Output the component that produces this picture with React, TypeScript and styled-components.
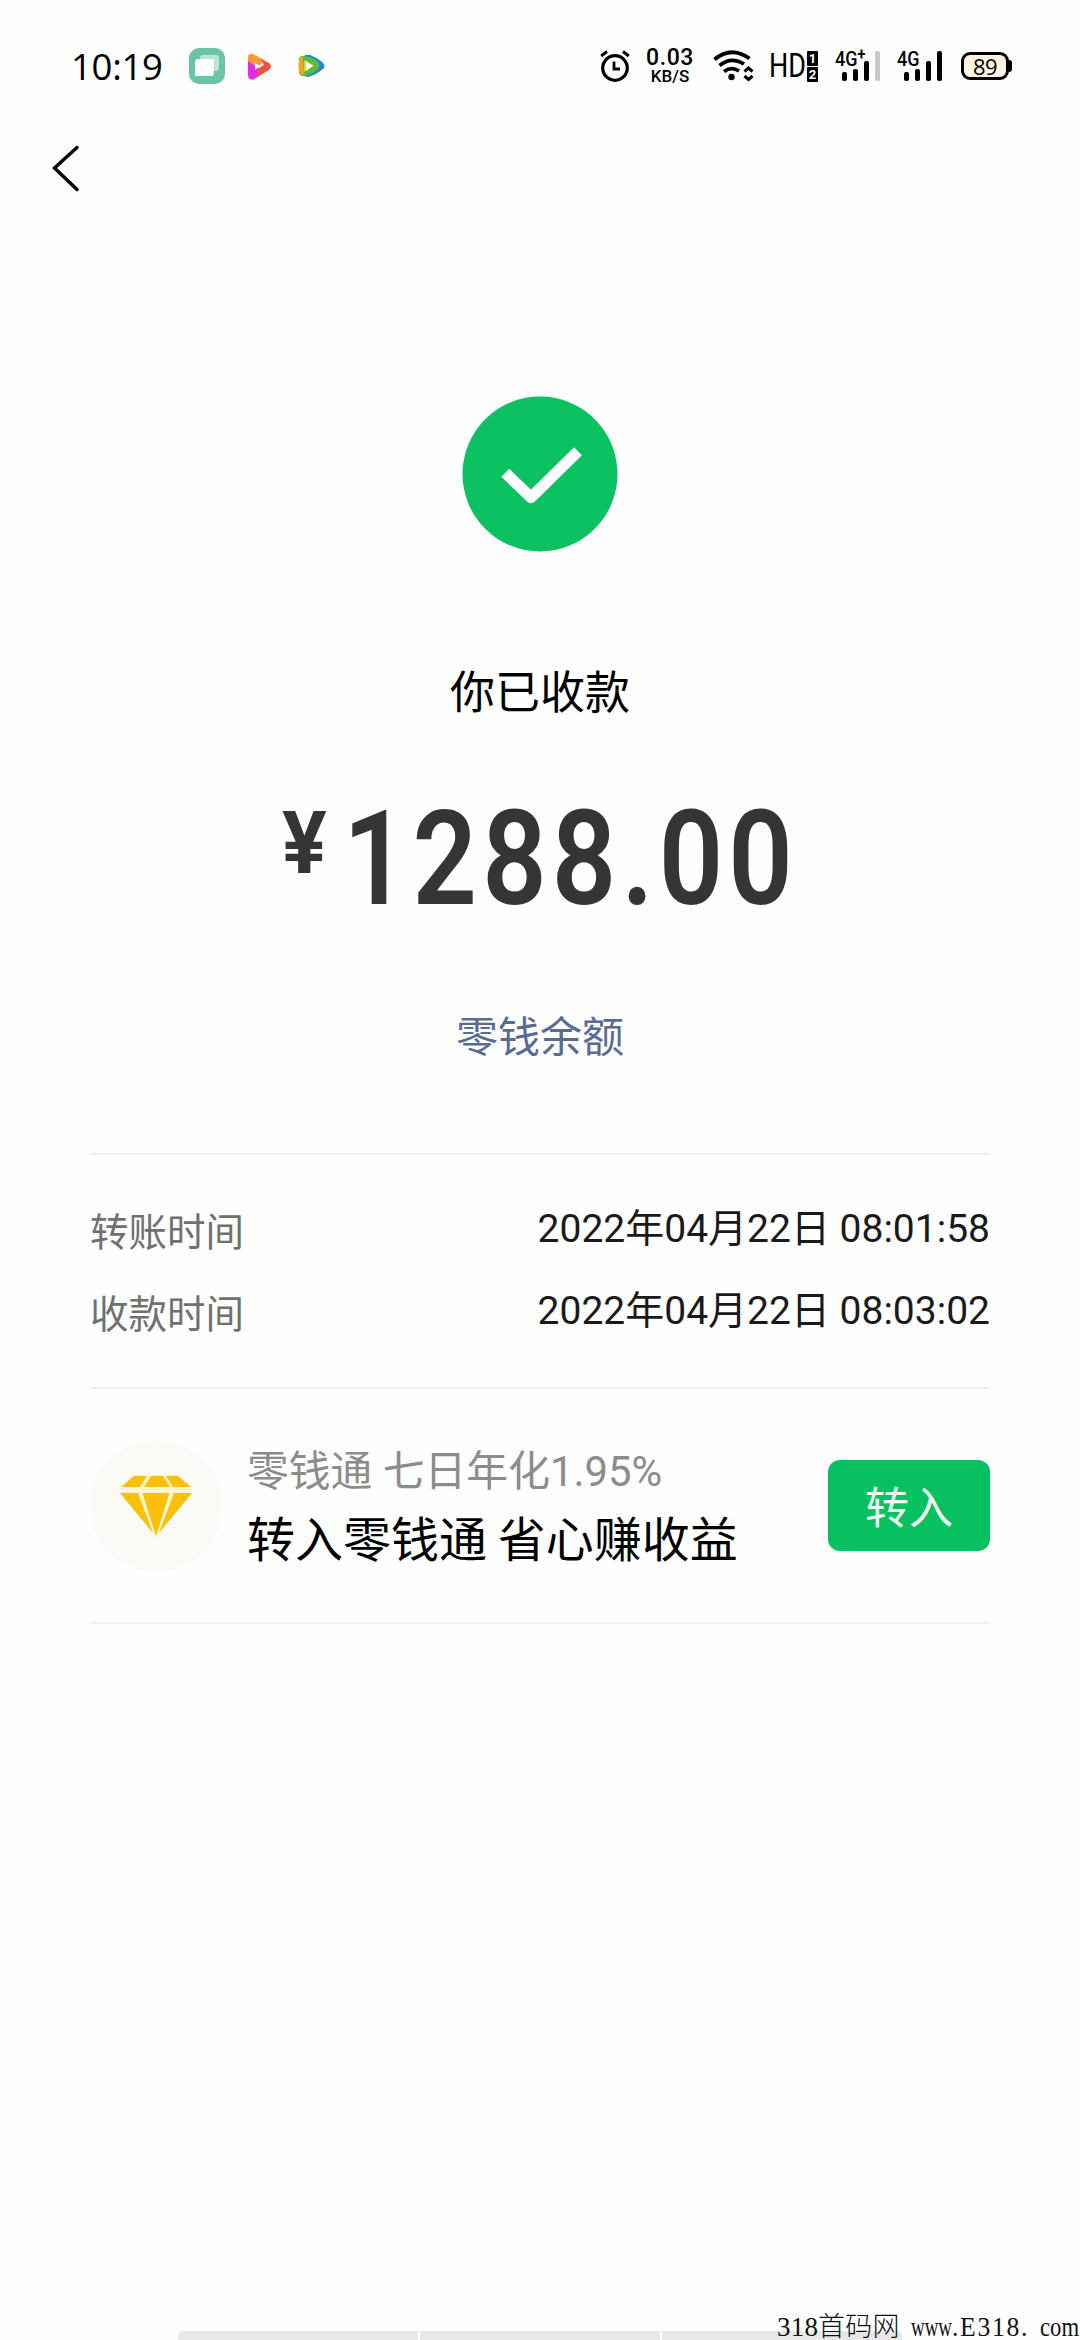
import React from 'react';
import styled, { createGlobalStyle } from 'styled-components';

const CJK = "'Noto Sans CJK SC', sans-serif";
const ROBOTO = "Roboto, 'Noto Sans CJK SC', sans-serif";

const GlobalStyle = createGlobalStyle`
  * { box-sizing: border-box; }
  body { margin: 0; background: #fefefe; }
  svg { display: block; flex: none; }
`;

const Page = styled.div`
  position: relative;
  display: flex;
  flex-direction: column;
  width: 1080px;
  height: 2340px;
  overflow: hidden;
  background: #fefefe;
  color: #000;
  font-family: ${CJK};
`;

const StatusBar = styled.header`
  display: flex;
  align-items: center;
  justify-content: space-between;
  height: 132px;
  padding: 0 68px 0 71px;
`;

const StatusGroup = styled.div`
  display: flex;
  align-items: center;
`;

const Clock = styled.span`
  width: 118px;
  font: 400 36.5px/48px 'Open Sans', sans-serif;
  letter-spacing: -0.3px;
`;

const StatusIcon = styled.svg<{ $before?: number }>`
  margin-left: ${(p) => p.$before ?? 0}px;
`;

const Speed = styled.div`
  display: flex;
  flex-direction: column;
  align-items: center;
  width: 50px;
  margin-left: 15px;
  margin-right: -1px;
  font-family: Roboto, sans-serif;
  font-weight: 500;
`;

const SpeedValue = styled.span`
  font-size: 23px;
  line-height: 20px;
  letter-spacing: 0.6px;
`;

const SpeedUnit = styled.span`
  font-size: 17px;
  line-height: 17px;
`;

const HdBadge = styled.div`
  display: flex;
  align-items: center;
  width: 50px;
  margin-left: 14px;
`;

const HdText = styled.span`
  width: 38px;
  font: 400 32.5px/36px Roboto, sans-serif;
  transform: scaleX(0.83);
  transform-origin: left;
`;

const SimStack = styled.span`
  display: flex;
  flex-direction: column;
  gap: 1px;
`;

const Sim = styled.span`
  width: 11px;
  height: 15px;
  border-radius: 1px;
  background: #000;
  color: #fff;
  font: 700 13px/15px Roboto, sans-serif;
  text-align: center;
`;

const SignalBox = styled.div<{ $before: number }>`
  position: relative;
  display: flex;
  align-items: flex-end;
  gap: 6px;
  width: 46px;
  height: 30px;
  margin-left: ${(p) => p.$before}px;
  padding-left: 7px;
`;

const SignalBar = styled.i<{ $height: number; $off?: boolean }>`
  width: 5px;
  height: ${(p) => p.$height}px;
  border-radius: 2px;
  background: ${(p) => (p.$off ? '#c8c8c8' : '#000')};
`;

const SignalLabel = styled.span`
  position: absolute;
  top: -2px;
  left: 0;
  font: 500 20px/20px Roboto, sans-serif;
  transform: scaleX(0.9);
  transform-origin: left;
  white-space: nowrap;
`;

const SignalPlus = styled.sup`
  position: relative;
  top: -3px;
  font-size: 16px;
  font-weight: 700;
  line-height: 0;
  vertical-align: 3px;
`;

const Battery = styled.div`
  display: flex;
  align-items: center;
  margin-left: 18px;
`;

const BatteryCell = styled.span`
  width: 48px;
  height: 28px;
  border: 3px solid #000;
  border-radius: 9px;
  background: #fdf5df;
  font: 400 22px/22px 'Open Sans', sans-serif;
  letter-spacing: -0.5px;
  text-align: center;
`;

const BatteryTip = styled.span`
  width: 3px;
  height: 12px;
  border-radius: 0 3px 3px 0;
  background: #000;
`;

const NavBar = styled.nav`
  display: flex;
  align-items: center;
  height: 72px;
  padding-left: 51px;
`;

const Result = styled.main`
  display: flex;
  flex-direction: column;
  align-items: center;
  padding-top: 192px;
`;

const Title = styled.h1`
  margin: 108px 0 0;
  font: 400 45px/60px ${CJK};
`;

const Amount = styled.div`
  display: flex;
  align-items: flex-start;
  width: 516px;
  height: 140px;
  margin-top: 69px;
  color: #353535;
  font-family: Roboto, sans-serif;
`;

const Currency = styled.span`
  width: 64px;
  font-size: 87px;
  font-weight: 700;
  line-height: 108px;
  transform: scaleX(0.96);
  transform-origin: left;
`;

const Digits = styled.span`
  margin-left: 14px;
  font-size: 132px;
  font-weight: 600;
  line-height: 140px;
  letter-spacing: 6px;
  transform: scaleX(0.855);
  transform-origin: left;
`;

const BalanceLink = styled.a`
  margin-top: 77px;
  color: #586b93;
  font-size: 42px;
  line-height: 56px;
`;

const Details = styled.dl`
  margin: 91px 90px 0;
  padding: 33px 0 35px;
  border-top: 2px solid #eee;
  border-bottom: 2px solid #eee;
`;

const DetailRow = styled.div`
  display: flex;
  justify-content: space-between;
  height: 82px;
  line-height: 82px;
`;

const DetailLabel = styled.dt`
  color: #707070;
  font-size: 38.5px;
`;

const DetailValue = styled.dd`
  margin: 0;
  color: #1a1a1a;
  font-family: ${ROBOTO};
  font-size: 39px;
`;

const Promo = styled.section`
  display: flex;
  align-items: center;
  height: 235px;
  margin: 0 90px;
  border-bottom: 2px solid #f1f1f1;
`;

const PromoBadge = styled.div`
  display: flex;
  align-items: center;
  justify-content: center;
  width: 132px;
  height: 132px;
  border-radius: 50%;
  background: #fafaf7;
`;

const PromoText = styled.div`
  display: flex;
  flex: 1;
  flex-direction: column;
  margin: -3px 0 0 25px;
  white-space: nowrap;
`;

const PromoRate = styled.span`
  color: #8c8c8c;
  font: 400 41.8px/66px ${ROBOTO};
`;

const PromoTitle = styled.span`
  margin-top: -2px;
  font-size: 48px;
  line-height: 66px;
`;

const TransferButton = styled.button`
  width: 162px;
  height: 91px;
  padding: 0;
  border: 0;
  border-radius: 12px;
  background: #07c160;
  color: #f2fff7;
  font: 400 44px/91px ${CJK};
`;

const HomeBar = styled.div`
  display: flex;
  gap: 2px;
  width: 724px;
  height: 9px;
  margin: auto auto 0 178px;
  border-radius: 5px 5px 0 0;
  overflow: hidden;
`;

const HomeSegment = styled.span`
  flex: 1;
  background: #e8e8e8;
`;

const Watermark = styled.div`
  position: absolute;
  right: 0;
  bottom: 0;
  display: flex;
  width: 303px;
  color: #111;
  font: 400 27px/26px 'Liberation Serif', 'Noto Sans CJK SC', serif;
  white-space: pre;
`;

const MarkPart = styled.span<{ $width: number; $scale?: number; $spacing?: number; $light?: boolean }>`
  width: ${(p) => p.$width}px;
  letter-spacing: ${(p) => p.$spacing ?? 0}px;
  font-weight: ${(p) => (p.$light ? 300 : 400)};
  transform: scaleX(${(p) => p.$scale ?? 1});
  transform-origin: left;
`;

const DETAILS = [
  { label: '转账时间', value: '2022年04月22日 08:01:58' },
  { label: '收款时间', value: '2022年04月22日 08:03:02' },
];

const BAR_HEIGHTS = [9, 12, 20, 30];

function Signal({ before, plus, level }: { before: number; plus?: boolean; level: number }) {
  return (
    <SignalBox $before={before}>
      {BAR_HEIGHTS.map((h, i) => (
        <SignalBar key={h} $height={h} $off={i >= level} />
      ))}
      <SignalLabel>4G{plus && <SignalPlus>+</SignalPlus>}</SignalLabel>
    </SignalBox>
  );
}

function CopyAppIcon() {
  return (
    <StatusIcon width="36" height="36" viewBox="0 0 36 36">
      <rect width="36" height="36" rx="10" fill="#6bc5a3" />
      <path d="M11 10Q11 7 14 7H27Q30 7 30 10V20Q30 23 27 23H11Z" fill="#b9e6d5" />
      <path d="M6 14Q6 11 9 11H22Q25 11 25 14V25Q25 28 22 28H6Z" fill="#fff" />
    </StatusIcon>
  );
}

function PinkPlayIcon() {
  return (
    <StatusIcon $before={22} width="25" height="27" viewBox="0 0 25 27">
      <path d="M1 5Q1 0 6 1L17 7L11 15L1 10Z" fill="#fb9a35" />
      <path d="M14 6L22 10Q26 13 22 17L9 25L10 16L17 12Z" fill="#f1503a" />
      <path d="M1 8L11 15L10 24Q6 28 3 26Q1 25 1 22Z" fill="#dc2ee8" />
      <path d="M8 10V17L13 13Z" fill="#fff" />
    </StatusIcon>
  );
}

function GreenPlayIcon() {
  return (
    <StatusIcon $before={26} width="27" height="24" viewBox="0 0 27 24">
      <path d="M6 2Q8 0 12 1Q20 4 25 9Q28 12 25 15Q18 21 10 23Q6 23 6 20Z" fill="#2388cf" />
      <path d="M1 5Q1 2 5 2Q15 3 20 8Q23 12 20 15Q13 22 4 22Q1 21 1 18Z" fill="#59bd36" />
      <path d="M1 5Q1 2 5 3L6 20Q2 22 1 18Q0 12 1 5Z" fill="#eda621" />
      <path d="M6 6L16 11.5L6 18Z" fill="#bde334" />
      <path d="M8 7L15 12L8 17Z" fill="#fff" />
    </StatusIcon>
  );
}

function AlarmIcon() {
  return (
    <StatusIcon width="30" height="32" viewBox="0 0 30 32" fill="none" stroke="#000">
      <circle cx="15" cy="18" r="12.3" strokeWidth="3.2" />
      <path d="M14 11.5V19H20" strokeWidth="2.8" />
      <path d="M1.2 6L7 1.5M28.8 6L23 1.5" strokeWidth="3" />
    </StatusIcon>
  );
}

function WifiIcon() {
  return (
    <StatusIcon $before={19} width="42" height="32" viewBox="0 0 42 32" fill="none" stroke="#000">
      <path d="M1.5 9.5Q18 -4.5 36.5 8.5" strokeWidth="3.8" />
      <path d="M6.5 15.5Q18 6 31 14" strokeWidth="3.8" />
      <path d="M11 21.5Q18.5 16 26 21" strokeWidth="3.8" />
      <circle cx="18.5" cy="27" r="3.2" fill="#000" stroke="none" />
      <path d="M31.5 21.5L35.5 18L39.5 21.5M31.5 26L35.5 29.5L39.5 26" strokeWidth="3" />
    </StatusIcon>
  );
}

function BackIcon() {
  return (
    <svg width="30" height="50" viewBox="0 0 30 50" fill="none" stroke="#000" strokeWidth="3.4" strokeLinecap="round">
      <path d="M26 4.5L3.500 25L26 46.5" />
    </svg>
  );
}

function SuccessIcon() {
  return (
    <svg width="156" height="156" viewBox="0 0 156 156">
      <circle cx="78" cy="78" r="77.5" fill="#0bc161" />
      <path d="M43.3 76.7L69 101.5L116 55.3" fill="none" stroke="#fff" strokeWidth="11.3" strokeLinejoin="round" />
    </svg>
  );
}

function DiamondIcon() {
  return (
    <svg width="72" height="64" viewBox="0 0 72 64">
      <path d="M14 1H58L72 13.5V19L36 64L0 19V13.5Z" fill="#fff6cf" />
      <g fill="#fabf08">
        <path d="M14 2H27L20 13H1Z" />
        <path d="M31 2H43L50 13H24Z" />
        <path d="M46 2H58L71 13H53Z" />
        <path d="M0 19H18L33 59Z" />
        <path d="M22.5 19H49.5L36 62Z" />
        <path d="M54 19H72L39 59Z" />
      </g>
    </svg>
  );
}

export default function App() {
  return (
    <Page>
      <GlobalStyle />
      <StatusBar>
        <StatusGroup>
          <Clock>10:19</Clock>
          <CopyAppIcon />
          <PinkPlayIcon />
          <GreenPlayIcon />
        </StatusGroup>
        <StatusGroup>
          <AlarmIcon />
          <Speed>
            <SpeedValue>0.03</SpeedValue>
            <SpeedUnit>KB/S</SpeedUnit>
          </Speed>
          <WifiIcon />
          <HdBadge>
            <HdText>HD</HdText>
            <SimStack>
              <Sim>1</Sim>
              <Sim>2</Sim>
            </SimStack>
          </HdBadge>
          <Signal before={16} plus level={3} />
          <Signal before={16} level={4} />
          <Battery>
            <BatteryCell>89</BatteryCell>
            <BatteryTip />
          </Battery>
        </StatusGroup>
      </StatusBar>
      <NavBar>
        <BackIcon />
      </NavBar>
      <Result>
        <SuccessIcon />
        <Title>你已收款</Title>
        <Amount>
          <Currency>¥</Currency>
          <Digits>1288.00</Digits>
        </Amount>
        <BalanceLink>零钱余额</BalanceLink>
      </Result>
      <Details>
        {DETAILS.map((d) => (
          <DetailRow key={d.label}>
            <DetailLabel>{d.label}</DetailLabel>
            <DetailValue>{d.value}</DetailValue>
          </DetailRow>
        ))}
      </Details>
      <Promo>
        <PromoBadge>
          <DiamondIcon />
        </PromoBadge>
        <PromoText>
          <PromoRate>零钱通 七日年化1.95%</PromoRate>
          <PromoTitle>转入零钱通 省心赚收益</PromoTitle>
        </PromoText>
        <TransferButton>转入</TransferButton>
      </Promo>
      <HomeBar>
        <HomeSegment />
        <HomeSegment />
        <HomeSegment />
      </HomeBar>
      <Watermark>
        <MarkPart $width={134} $spacing={0.2} $light>318首码网 </MarkPart>
        <MarkPart $width={41} $scale={0.7}>www</MarkPart>
        <MarkPart $width={88} $scale={0.95} $spacing={1.8}>.E318.</MarkPart>
        <MarkPart $width={40} $scale={0.84}>com</MarkPart>
      </Watermark>
    </Page>
  );
}
